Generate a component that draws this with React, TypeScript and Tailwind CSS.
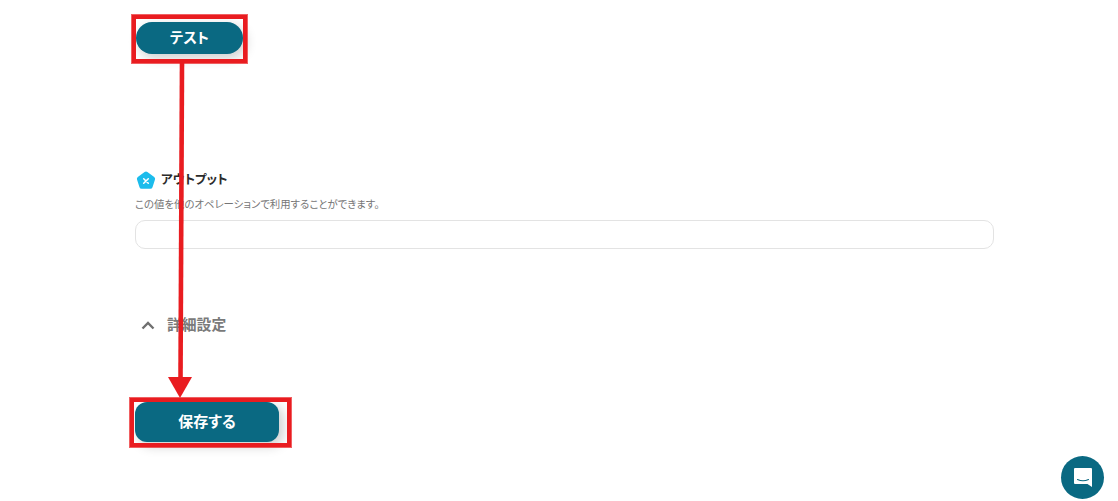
const FONT = "font-['Noto_Sans_CJK_JP','Noto_Sans',sans-serif] [font-feature-settings:'palt']";

function OutputIcon() {
  return (
    <svg width="20" height="19" viewBox="0 0 20 19" className="shrink-0">
      <path
        d="M8.6 1 Q10 0 11.4 1 L18.2 5.9 Q19.5 6.9 19 8.4 L16.5 16.2 Q16 17.8 14.3 17.8 L5.7 17.8 Q4 17.8 3.5 16.2 L1 8.4 Q0.5 6.9 1.8 5.9 Z"
        fill="#1cbcec"
      />
      <path d="M7.7 7.7 L12.3 12.3 M12.3 7.7 L7.7 12.3" stroke="#fff" strokeWidth="1.5" strokeLinecap="round" />
    </svg>
  );
}

function Annotations() {
  return (
    <>
      <div className="absolute left-[132px] top-[15px] h-[48px] w-[115px] border-[4px] border-[#e91c20] shadow-[0_0_0_1px_rgba(233,28,32,0.7)]" />
      <div className="absolute left-[130px] top-[398px] h-[49px] w-[161px] border-[4px] border-[#e91c20] shadow-[0_0_0_1px_rgba(233,28,32,0.7)]" />
      <svg width="1118" height="501" className="pointer-events-none absolute left-0 top-0">
        <line x1="182" y1="63" x2="180.5" y2="380" stroke="#e91c20" strokeWidth="4.6" />
        <polygon points="168,377 192,377 180,398" fill="#e91c20" />
      </svg>
    </>
  );
}

export default function App() {
  return (
    <div className={`relative h-[501px] w-[1118px] overflow-hidden bg-white ${FONT}`}>
      <div className="flex w-[994px] flex-col items-start pl-[135px] pt-[22px]">
        <button className="ml-px flex h-8 w-[107px] items-center justify-center rounded-[16px] bg-[#0a6982] pb-[2px] text-[14.5px] font-bold text-white shadow-[3px_4px_12px_rgba(0,0,0,0.2)]">
          テスト
        </button>

        <div className="mt-[116px] flex h-5 items-center gap-[5px] pl-px">
          <OutputIcon />
          <span className="pb-[2px] text-[12.5px] font-bold leading-5 text-[#2b2b2b]">アウトプット</span>
        </div>
        <p className="mt-[6px] h-4 text-[10.4px] leading-4 text-[#757575]">
          この値を他のオペレーションで利用することができます。
        </p>
        <div className="mt-[8px] h-[29px] w-full rounded-[10px] border border-[#e3e3e3]" />

        <div className="mt-[65px] flex h-[22px] items-center gap-[12px] pl-[6px]">
          <svg width="14" height="9" viewBox="0 0 14 9" className="mt-px shrink-0">
            <path d="M1.5 7.5 L7 2 L12.5 7.5" fill="none" stroke="#707070" strokeWidth="2.4" />
          </svg>
          <span className="pb-[2px] text-[14.8px] font-bold leading-[22px] text-[#7a7a7a]">詳細設定</span>
        </div>

        <button className="mt-[66px] flex h-10 w-36 items-center justify-center rounded-[12px] bg-[#0a6982] pb-[2px] text-[15px] font-bold text-white shadow-[4px_4px_12px_rgba(0,0,0,0.2)]">
          保存する
        </button>
      </div>

      <Annotations />

      <div className="absolute left-[1061px] top-[456px] flex h-[43px] w-[43px] items-center justify-center rounded-full bg-[#0a6982]">
        <svg width="20" height="21" viewBox="0 0 20 21">
          <path
            d="M2 1 H18 Q19 1 19 2 V20 L14.5 17 H2 Q1 17 1 16 V2 Q1 1 2 1 Z"
            fill="#fff"
          />
          <path d="M4.5 12.5 Q10 15 15.5 12.5" fill="none" stroke="#0a6982" strokeWidth="1.1" strokeLinecap="round" />
        </svg>
      </div>
    </div>
  );
}
